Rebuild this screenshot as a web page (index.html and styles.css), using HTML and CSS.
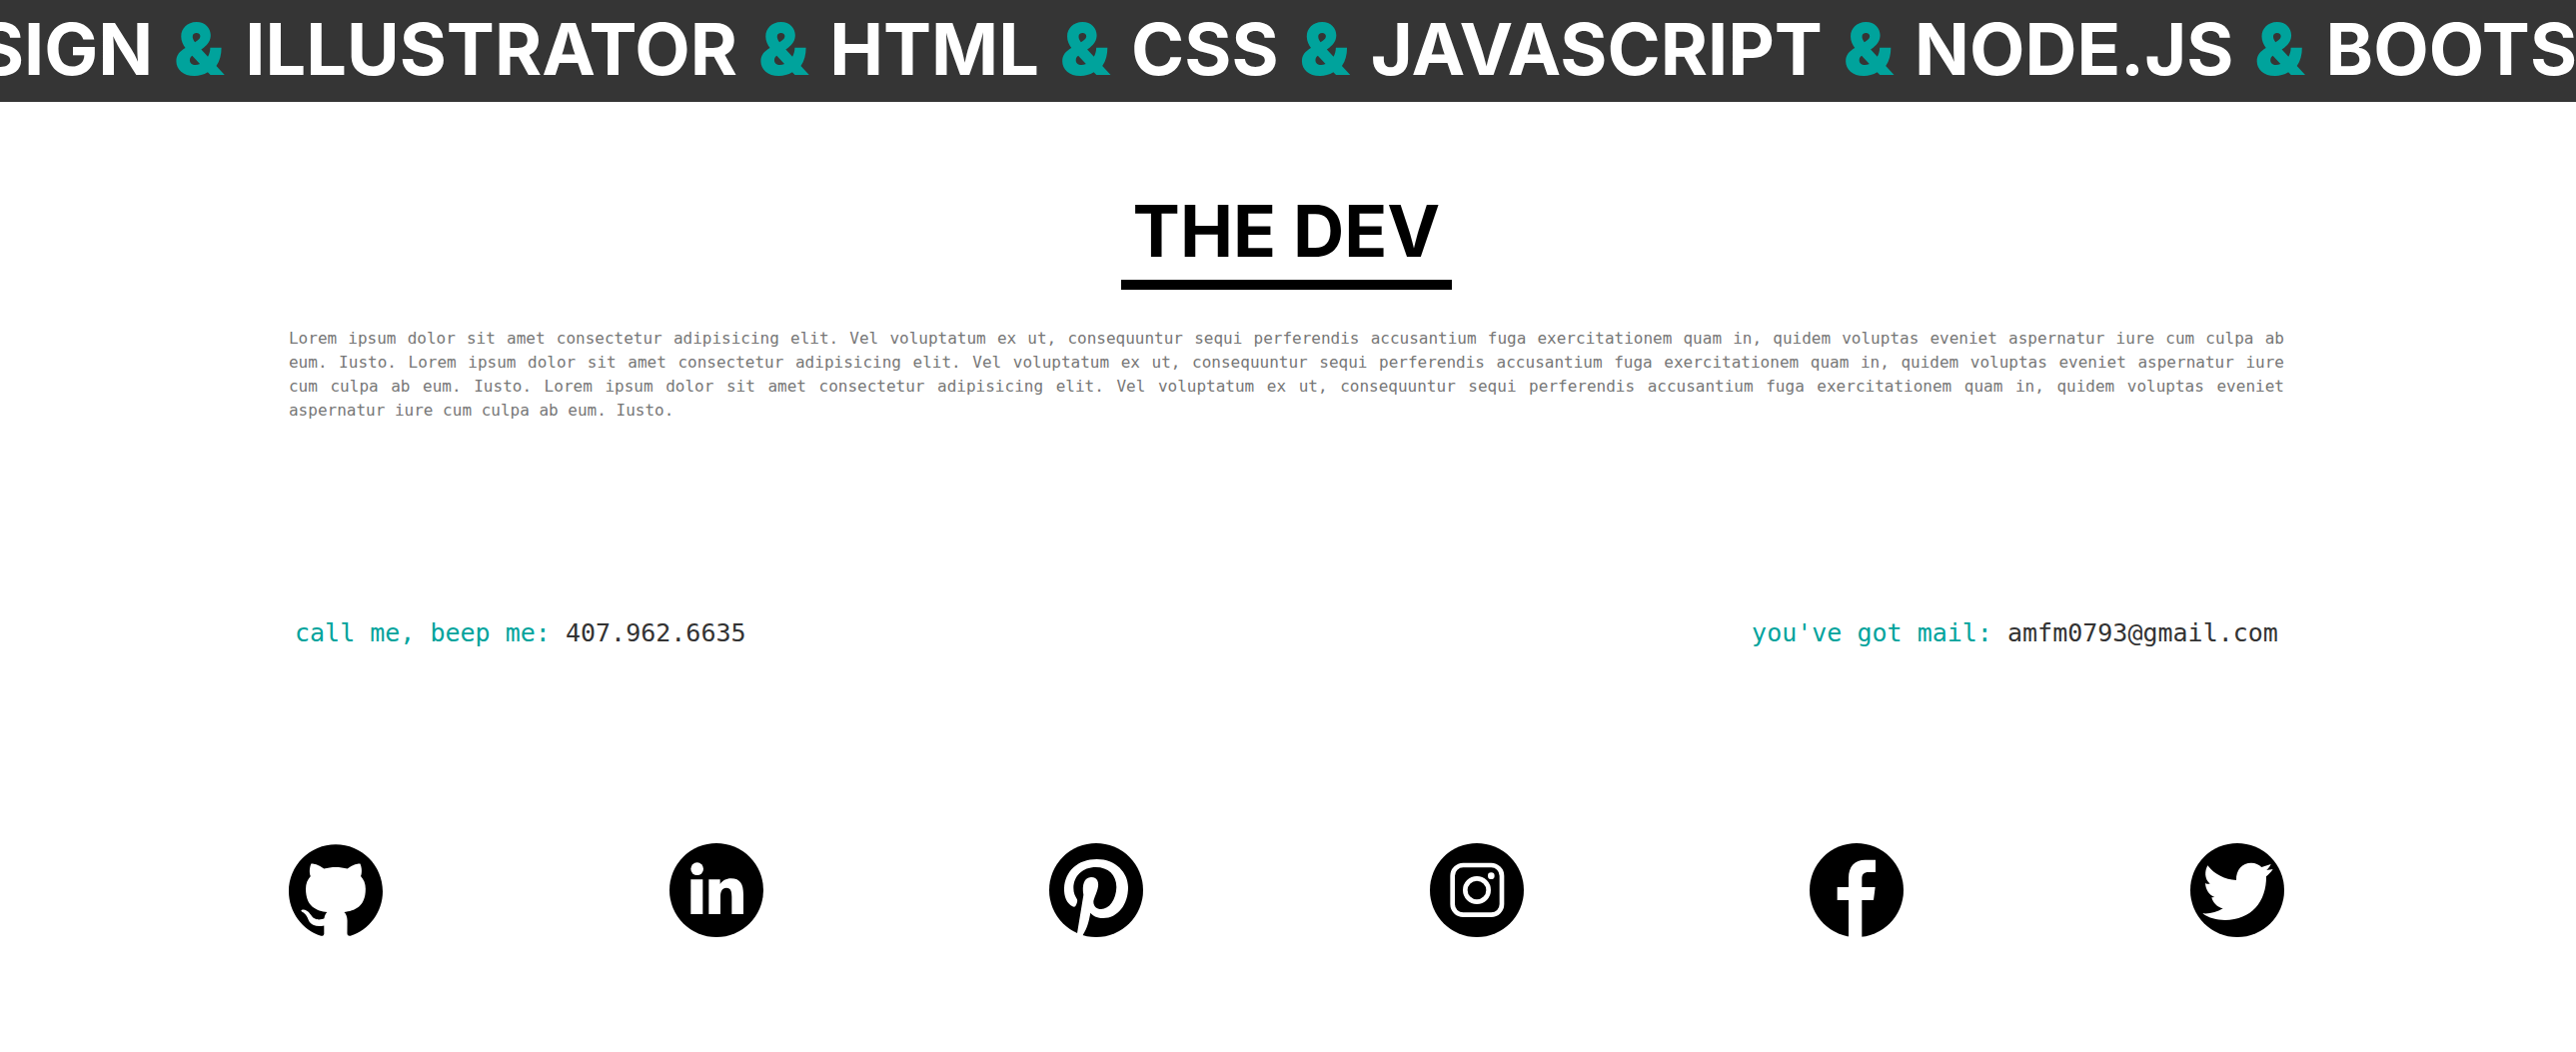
FILE: index.html
```html
<!DOCTYPE html>
<html lang="en">
<head>
<meta charset="utf-8">
<title>The Dev</title>
<link rel="stylesheet" href="styles.css">
</head>
<body>
<header class="skills">
  <p class="skills-line">DESIGN <span class="amp">&amp;</span> ILLUSTRATOR <span class="amp">&amp;</span> HTML <span class="amp">&amp;</span> CSS <span class="amp">&amp;</span> JAVASCRIPT <span class="amp">&amp;</span> NODE.JS <span class="amp">&amp;</span> BOOTSTRAP</p>
</header>
<main class="content">
  <h1 class="title">THE DEV</h1>
  <p class="bio">Lorem ipsum dolor sit amet consectetur adipisicing elit. Vel voluptatum ex ut, consequuntur sequi perferendis accusantium fuga exercitationem quam in, quidem voluptas eveniet aspernatur iure cum&nbsp;culpa ab eum. Iusto. Lorem ipsum dolor sit amet consectetur adipisicing elit. Vel voluptatum ex ut, consequuntur sequi perferendis accusantium fuga exercitationem quam in, quidem voluptas eveniet aspernatur iure cum&nbsp;culpa ab eum. Iusto. Lorem ipsum dolor sit amet consectetur adipisicing elit. Vel voluptatum ex ut, consequuntur sequi perferendis accusantium fuga exercitationem quam in, quidem voluptas eveniet aspernatur iure cum&nbsp;culpa ab eum. Iusto.</p>
  <div class="contact">
    <p class="contact-item"><span class="contact-label">call me, beep me:</span> <a href="tel:4079626635">407.962.6635</a></p>
    <p class="contact-item"><span class="contact-label">you've got mail:</span> <a href="mailto:amfm0793@gmail.com">amfm0793@gmail.com</a></p>
  </div>
  <nav class="social" aria-label="Social links">
    <a href="#github" aria-label="GitHub"><svg class="icon" viewBox="0 0 24 24"><path d="M12 .297c-6.63 0-12 5.373-12 12 0 5.303 3.438 9.8 8.205 11.385.6.113.82-.258.82-.577 0-.285-.01-1.04-.015-2.04-3.338.724-4.042-1.61-4.042-1.61C4.422 18.07 3.633 17.7 3.633 17.7c-1.087-.744.084-.729.084-.729 1.205.084 1.838 1.236 1.838 1.236 1.07 1.835 2.809 1.305 3.495.998.108-.776.417-1.305.76-1.605-2.665-.3-5.466-1.332-5.466-5.93 0-1.31.465-2.38 1.235-3.22-.135-.303-.54-1.523.105-3.176 0 0 1.005-.322 3.3 1.23.96-.267 1.98-.399 3-.405 1.02.006 2.04.138 3 .405 2.28-1.552 3.285-1.23 3.285-1.23.645 1.653.24 2.873.12 3.176.765.84 1.23 1.91 1.23 3.22 0 4.61-2.805 5.625-5.475 5.92.42.36.81 1.096.81 2.22 0 1.606-.015 2.896-.015 3.286 0 .315.21.69.825.57C20.565 22.092 24 17.592 24 12.297c0-6.627-5.373-12-12-12"/></svg></a>
    <a href="#linkedin" aria-label="LinkedIn"><svg class="icon" viewBox="59 45 282 282"><circle cx="200" cy="186" r="141"/><g fill="#fff"><circle cx="142" cy="122" r="19"/><path d="M123 154h36v104h-36zM177 154h34v14c6-10 18-17 33-17 28 0 37 18 37 48v59h-35v-52c0-14-2-27-16-27s-18 12-18 27v52h-35z"/></g></svg></a>
    <a href="#pinterest" aria-label="Pinterest"><svg class="icon" viewBox="60 45 282 282"><circle cx="201" cy="186" r="141"/><path fill="#fff" d="M144 316L163 200C158 170 165 148 186 147C207 147 210 167 206 180C201 200 193 213 193 222C194 236 203 243 216 243C240 243 261 215 262 177C262 140 237 117 200 117C160 117 133 144 133 180C133 195 138 204 143 212C147 218 142 228 139 234C137 237 133 237 130 235C113 226 104 205 105 180C107 130 145 93 203 93C260 93 297 134 297 177C297 230 266 270 222 270C206 270 192 264 184 254C178 285 175 297 161 321L144 327z"/></svg></a>
    <a href="#instagram" aria-label="Instagram"><svg class="icon" viewBox="63 45 282 282"><circle cx="204" cy="186" r="141"/><g fill="none" stroke="#fff" stroke-width="14"><rect x="131" y="111" width="148" height="149" rx="32"/><circle cx="204" cy="186" r="35"/></g><circle cx="247" cy="143" r="10" fill="#fff"/></svg></a>
    <a href="#facebook" aria-label="Facebook"><svg class="icon" viewBox="65 45 282 282"><circle cx="206" cy="186" r="141"/><path fill="#fff" d="M182 330V216h-34v-39h34v-28c0-34 18-54 50-54h31v37h-21c-14 0-20 7-20 19v26h40l-5 39h-35v114z"/></svg></a>
    <a href="#twitter" aria-label="Twitter"><svg class="icon" viewBox="66 45 282 282"><circle cx="207" cy="186" r="141"/><path fill="#fff" d="M103 256C125 258 145 252 164 241C147 238 134 224 130 208L139 207C122 200 112 184 111 165C116 168 120 168 125 167C108 152 109 129 118 112C140 140 170 154 204 156C203 125 222 104 249 104C262 104 272 109 280 117L308 108C305 116 300 121 295 126L314 123C308 132 301 139 294 145C295 220 250 276 170 276C145 276 122 270 103 256z"/></svg></a>
  </nav>
</main>
</body>
</html>
```
FILE: styles.css
```css
* { box-sizing: border-box; }
body {
  margin: 0;
  background: #fff;
  color: #333;
  font-family: "DejaVu Sans Mono", monospace;
}
p, h1 { margin: 0; }
a { color: inherit; text-decoration: none; }

.skills {
  display: flex;
  justify-content: center;
  overflow: hidden;
  padding: 0 0 4px 78px;
  background: #353535;
  color: #fff;
}
.skills-line {
  flex: none;
  white-space: nowrap;
  font: 700 72px/98px Inter, sans-serif;
}
.amp {
  padding: 0 4px;
  color: #00a39c;
  font-weight: 900;
}

.content {
  display: flex;
  flex-direction: column;
  padding: 80px 11.33% 112px 11.21%;
}
.title {
  align-self: center;
  padding: 0 12px;
  border-bottom: 10px solid #000;
  color: #000;
  font: 700 71px/98px Inter, sans-serif;
}
.bio {
  margin-top: 37px;
  color: #777;
  font-size: 16px;
  line-height: 24px;
  text-align: justify;
}
.contact {
  display: flex;
  justify-content: space-between;
  margin-top: 195px;
  padding: 0 6px;
  font-size: 25px;
  line-height: 32px;
}
.contact-label { color: #00a39c; }
.social {
  display: flex;
  justify-content: space-between;
  margin-top: 194px;
}
.icon {
  display: block;
  width: 94px;
  height: 94px;
}
```
